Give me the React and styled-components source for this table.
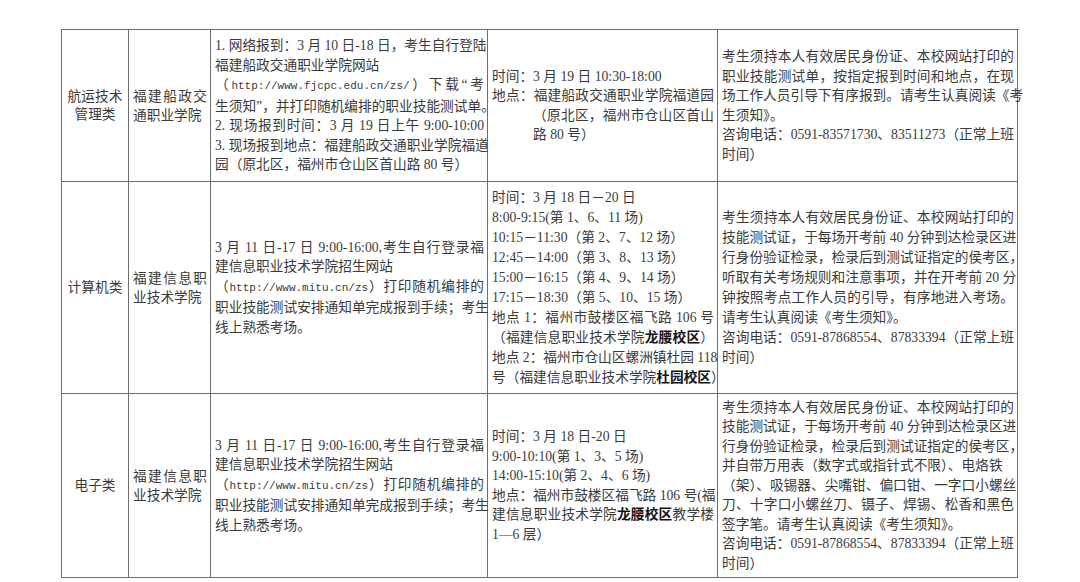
import React from "react";
import styled, { createGlobalStyle } from "styled-components";

const Global = createGlobalStyle`
  html, body {
    margin: 0;
    padding: 0;
    background: #ffffff;
  }
  body {
    font-family: "Liberation Serif", "Noto Sans CJK SC", serif;
    color: #3a3a3a;
  }
`;

const Page = styled.div`
  width: 1080px;
  height: 582px;
  box-sizing: border-box;
  padding: 29px 0 0 61px;
  overflow: hidden;
`;

const Table = styled.div`
  display: grid;
  grid-template-columns: 67px 82px 277px 230px 300px;
  grid-template-rows: 152px 212px 184px;
  width: 957px;
  border-top: 1px solid #6e6e6e;
  border-left: 1px solid #6e6e6e;
`;

const Cell = styled.div`
  box-sizing: border-box;
  border-right: 1px solid #6e6e6e;
  border-bottom: 1px solid #6e6e6e;
  display: flex;
  flex-direction: column;
  justify-content: center;
  align-items: ${(p) => (p.$center ? "center" : "stretch")};
  padding: ${(p) => (p.$center ? "0" : "0 3px 0 4px")};
  font-size: 13.7px;
  line-height: ${(p) => p.$lh || "19.5px"};
  min-width: 0;
`;

const Line = styled.div`
  white-space: nowrap;
  text-align: ${(p) => (p.$full ? "justify" : "left")};
  text-align-last: ${(p) => (p.$full ? "justify" : "auto")};
  padding-left: ${(p) => (p.$indent ? "3em" : "0")};
`;

const Url = styled.span`
  font-family: "Liberation Mono", monospace;
  font-size: 11px;
`;

const Strong = styled.b`
  font-weight: 700;
  color: #151515;
`;

function Lines({ items }) {
  return items.map((it, i) => {
    const o = typeof it === "string" || React.isValidElement(it) ? { t: it } : it;
    return (
      <Line key={i} $full={o.f} $indent={o.i}>
        {o.t}
      </Line>
    );
  });
}

const mituReg = [
  { t: "3 月 11 日-17 日 9:00-16:00,考生自行登录福", f: true },
  "建信息职业技术学院招生网站",
  {
    t: (
      <>
        （<Url>http://www.mitu.cn/zs</Url>）打印随机编排的
      </>
    ),
    f: true,
  },
  { t: "职业技能测试安排通知单完成报到手续；考生", f: true },
  "线上熟悉考场。",
];

const rows = [
  {
    major: ["航运技术", "管理类"],
    school: ["福建船政交", "通职业学院"],
    reg: [
      { t: "1. 网络报到：3 月 10 日-18 日，考生自行登陆", f: true },
      "福建船政交通职业学院网站",
      {
        t: (
          <>
            （<Url>http://www.fjcpc.edu.cn/zs/</Url>）下载“考
          </>
        ),
        f: true,
      },
      { t: "生须知”，并打印随机编排的职业技能测试单。", f: true },
      { t: "2. 现场报到时间：3 月 19 日上午 9:00-10:00", f: true },
      { t: "3. 现场报到地点：福建船政交通职业学院福道", f: true },
      "园（原北区，福州市仓山区首山路 80 号）",
    ],
    exam: [
      "时间：3 月 19 日 10:30-18:00",
      { t: "地点：福建船政交通职业学院福道园", f: true },
      { t: "（原北区，福州市仓山区首山", f: true, i: true },
      { t: "路 80 号）", i: true },
    ],
    note: [
      { t: "考生须持本人有效居民身份证、本校网站打印的", f: true },
      { t: "职业技能测试单，按指定报到时间和地点，在现", f: true },
      { t: "场工作人员引导下有序报到。请考生认真阅读《考", f: true },
      "生须知》。",
      { t: "咨询电话：0591-83571730、83511273（正常上班", f: true },
      "时间）",
    ],
  },
  {
    major: ["计算机类"],
    school: ["福建信息职", "业技术学院"],
    reg: mituReg,
    exam: [
      "时间：3 月 18 日－20 日",
      "8:00-9:15(第 1、6、11 场)",
      "10:15－11:30（第 2、7、12 场）",
      "12:45－14:00（第 3、8、13 场）",
      "15:00－16:15（第 4、9、14 场）",
      "17:15－18:30（第 5、10、15 场）",
      { t: "地点 1：福州市鼓楼区福飞路 106 号", f: true },
      {
        t: (
          <>
            （福建信息职业技术学院<Strong>龙腰校区</Strong>）
          </>
        ),
        f: true,
      },
      { t: "地点 2：福州市仓山区螺洲镇杜园 118", f: true },
      {
        t: (
          <>
            号（福建信息职业技术学院<Strong>杜园校区</Strong>）
          </>
        ),
        f: true,
      },
    ],
    examLh: "20px",
    note: [
      { t: "考生须持本人有效居民身份证、本校网站打印的", f: true },
      { t: "技能测试证，于每场开考前 40 分钟到达检录区进", f: true },
      { t: "行身份验证检录，检录后到测试证指定的侯考区，", f: true },
      { t: "听取有关考场规则和注意事项，并在开考前 20 分", f: true },
      { t: "钟按照考点工作人员的引导，有序地进入考场。", f: true },
      "请考生认真阅读《考生须知》。",
      { t: "咨询电话：0591-87868554、87833394（正常上班", f: true },
      "时间）",
    ],
    noteLh: "20px",
  },
  {
    major: ["电子类"],
    school: ["福建信息职", "业技术学院"],
    reg: mituReg,
    exam: [
      "时间：3 月 18 日-20 日",
      "9:00-10:10(第 1、3、5 场)",
      "14:00-15:10(第 2、4、6 场)",
      { t: "地点：福州市鼓楼区福飞路 106 号(福", f: true },
      {
        t: (
          <>
            建信息职业技术学院<Strong>龙腰校区</Strong>教学楼
          </>
        ),
        f: true,
      },
      "1—6 层）",
    ],
    note: [
      { t: "考生须持本人有效居民身份证、本校网站打印的", f: true },
      { t: "技能测试证，于每场开考前 40 分钟到达检录区进", f: true },
      { t: "行身份验证检录，检录后到测试证指定的侯考区，", f: true },
      "并自带万用表（数字式或指针式不限）、电烙铁",
      { t: "（架）、吸锡器、尖嘴钳、偏口钳、一字口小螺丝", f: true },
      { t: "刀、十字口小螺丝刀、镊子、焊锡、松香和黑色", f: true },
      "签字笔。请考生认真阅读《考生须知》。",
      { t: "咨询电话：0591-87868554、87833394（正常上班", f: true },
      "时间）",
    ],
  },
];

export default function App() {
  return (
    <>
      <Global />
      <Page>
        <Table>
          {rows.map((r, idx) => (
            <React.Fragment key={idx}>
              <Cell $center $lh="18px">
                <Lines items={r.major} />
              </Cell>
              <Cell $lh="19px">
                <Lines items={r.school.map((s, i) => (i === 0 ? { t: s, f: true } : s))} />
              </Cell>
              <Cell>
                <Lines items={r.reg} />
              </Cell>
              <Cell $lh={r.examLh}>
                <Lines items={r.exam} />
              </Cell>
              <Cell $lh={r.noteLh}>
                <Lines items={r.note} />
              </Cell>
            </React.Fragment>
          ))}
        </Table>
      </Page>
    </>
  );
}
